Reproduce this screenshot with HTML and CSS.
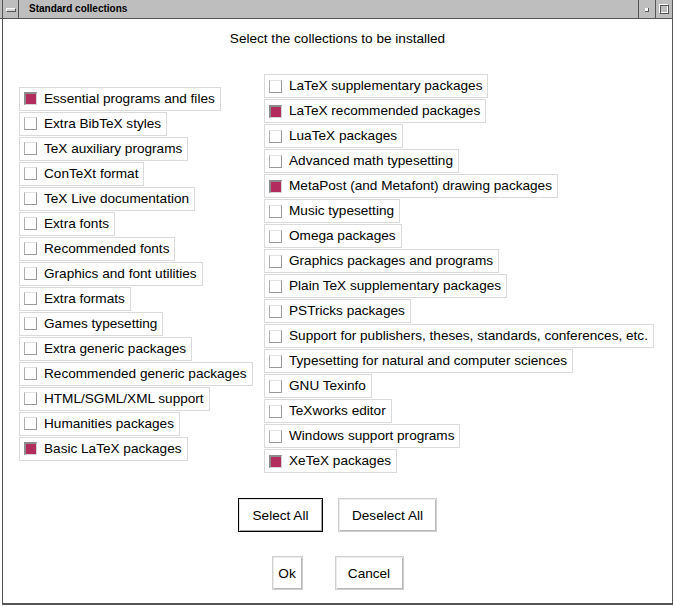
FILE: index.html
```html
<!DOCTYPE html>
<html>
<head>
<meta charset="utf-8">
<link rel="stylesheet" href="styles.css">
</head>
<body>
<div class="win">
  <div class="titlebar">
    <div class="sysbtn"><div class="minus"></div></div>
    <div class="title">Standard collections</div>
    <div class="tbtn"><div class="iconmin"></div></div>
    <div class="tbtn"><div class="iconmax"></div></div>
  </div>
  <div class="client">
    <div class="heading">Select the collections to be installed</div>
    <div class="cols">
      <div class="col col-left">
        <div class="item"><i class="cb on"></i><span>Essential programs and files</span></div>
        <div class="item"><i class="cb"></i><span>Extra BibTeX styles</span></div>
        <div class="item"><i class="cb"></i><span>TeX auxiliary programs</span></div>
        <div class="item"><i class="cb"></i><span>ConTeXt format</span></div>
        <div class="item"><i class="cb"></i><span>TeX Live documentation</span></div>
        <div class="item"><i class="cb"></i><span>Extra fonts</span></div>
        <div class="item"><i class="cb"></i><span>Recommended fonts</span></div>
        <div class="item"><i class="cb"></i><span>Graphics and font utilities</span></div>
        <div class="item"><i class="cb"></i><span>Extra formats</span></div>
        <div class="item"><i class="cb"></i><span>Games typesetting</span></div>
        <div class="item"><i class="cb"></i><span>Extra generic packages</span></div>
        <div class="item"><i class="cb"></i><span>Recommended generic packages</span></div>
        <div class="item"><i class="cb"></i><span>HTML/SGML/XML support</span></div>
        <div class="item"><i class="cb"></i><span>Humanities packages</span></div>
        <div class="item"><i class="cb on"></i><span>Basic LaTeX packages</span></div>
      </div>
      <div class="col col-right">
        <div class="item"><i class="cb"></i><span>LaTeX supplementary packages</span></div>
        <div class="item"><i class="cb on"></i><span>LaTeX recommended packages</span></div>
        <div class="item"><i class="cb"></i><span>LuaTeX packages</span></div>
        <div class="item"><i class="cb"></i><span>Advanced math typesetting</span></div>
        <div class="item"><i class="cb on"></i><span>MetaPost (and Metafont) drawing packages</span></div>
        <div class="item"><i class="cb"></i><span>Music typesetting</span></div>
        <div class="item"><i class="cb"></i><span>Omega packages</span></div>
        <div class="item"><i class="cb"></i><span>Graphics packages and programs</span></div>
        <div class="item"><i class="cb"></i><span>Plain TeX supplementary packages</span></div>
        <div class="item"><i class="cb"></i><span>PSTricks packages</span></div>
        <div class="item"><i class="cb"></i><span>Support for publishers, theses, standards, conferences, etc.</span></div>
        <div class="item"><i class="cb"></i><span>Typesetting for natural and computer sciences</span></div>
        <div class="item"><i class="cb"></i><span>GNU Texinfo</span></div>
        <div class="item"><i class="cb"></i><span>TeXworks editor</span></div>
        <div class="item"><i class="cb"></i><span>Windows support programs</span></div>
        <div class="item"><i class="cb on"></i><span>XeTeX packages</span></div>
      </div>
    </div>
    <div class="btnrow row1">
      <button class="btn default w-sel">Select All</button>
      <button class="btn w-desel">Deselect All</button>
    </div>
    <div class="btnrow row2">
      <button class="btn w-ok">Ok</button>
      <button class="btn w-cancel">Cancel</button>
    </div>
  </div>
</div>
</body>
</html>
```
FILE: styles.css
```css
* { box-sizing: border-box; }
html, body { margin: 0; padding: 0; }
body {
  width: 674px;
  height: 607px;
  overflow: hidden;
  background: #fff;
  font-family: "Liberation Sans", Arial, sans-serif;
  font-size: 13.6px;
  color: #000;
}
.win { width: 673px; }
.titlebar {
  display: flex;
  height: 19px;
  background: #bebebe;
  border-bottom: 1px solid #555;
  border-right: 1px solid #555;
}
.sysbtn {
  margin-left: 2px;
  width: 17px;
  border-left: 1px solid #555;
  border-right: 1px solid #555;
  display: flex;
  align-items: center;
  justify-content: center;
}
.minus {
  width: 10px;
  height: 4px;
  margin-top: 2px;
  background: #d4d4d4;
  border-top: 1px solid #fff;
  border-left: 1px solid #fff;
  border-bottom: 1px solid #555;
  border-right: 1px solid #555;
}
.title {
  flex: 1;
  padding-left: 10px;
  font-weight: bold;
  font-size: 10px;
  line-height: 18px;
}
.tbtn {
  width: 17px;
  border-left: 1px solid #555;
  display: flex;
  align-items: center;
  justify-content: center;
}
.iconmin {
  width: 4px;
  height: 4px;
  margin-top: 2px;
  background: #fff;
  border-right: 1px solid #555;
  border-bottom: 1px solid #555;
}
.iconmax {
  width: 10px;
  height: 10px;
  border-top: 1px solid #fff;
  border-left: 1px solid #fff;
  border-right: 1px solid #555;
  border-bottom: 1px solid #555;
  box-shadow: inset 1px 1px 0 #555, inset -1px -1px 0 #fff;
}
.client {
  margin-left: 2px;
  width: 671px;
  height: 586px;
  border-left: 1px solid #555;
  border-right: 1px solid #555;
  border-bottom: 2px solid #555;
  display: flex;
  flex-direction: column;
  align-items: center;
}
.heading {
  margin-top: 12px;
  line-height: 16px;
}
.cols {
  align-self: stretch;
  display: flex;
  align-items: center;
  margin-top: 27px;
  padding-left: 16px;
}
.col {
  display: flex;
  flex-direction: column;
  align-items: flex-start;
  gap: 1px;
}
.col-left { width: 245px; }
.item {
  display: flex;
  align-items: center;
  height: 24px;
  border: 1px solid #dadada;
  padding: 0 5px 0 4px;
  white-space: nowrap;
}
.item span { margin-left: 7px; line-height: 16px; }
.cb {
  display: block;
  width: 13px;
  height: 13px;
  background: #fff;
  border-style: solid;
  border-width: 1px;
  border-color: #e2e2e2 #9a9a9a #9a9a9a #b0b0b0;
}
.cb.on {
  background: #b22c5e;
  border-width: 2px 1px 1px 2px;
  border-color: #8c8c8c #d6d6d6 #d6d6d6 #8c8c8c;
}
.btnrow {
  display: flex;
  justify-content: center;
}
.row1 { margin-top: 25px; gap: 15px; }
.row2 { margin-top: 24px; gap: 32px; }
.btn {
  height: 34px;
  padding: 0;
  font-family: "Liberation Sans", Arial, sans-serif;
  font-size: 13.6px;
  color: #000;
  background: #fff;
  border: 1px solid #cfcfcf;
  box-shadow: inset 1px 1px 0 #ececec, inset -1px -1px 0 #b8b8b8;
  border-radius: 0;
}
.btn.default {
  border: 1px solid #000;
  box-shadow: inset 1px 1px 0 #e8e8e8, inset -1px -1px 0 #a6a6a6;
}
.w-sel { width: 85px; }
.w-desel { width: 99px; }
.w-ok { width: 31px; }
.w-cancel { width: 69px; }
```
